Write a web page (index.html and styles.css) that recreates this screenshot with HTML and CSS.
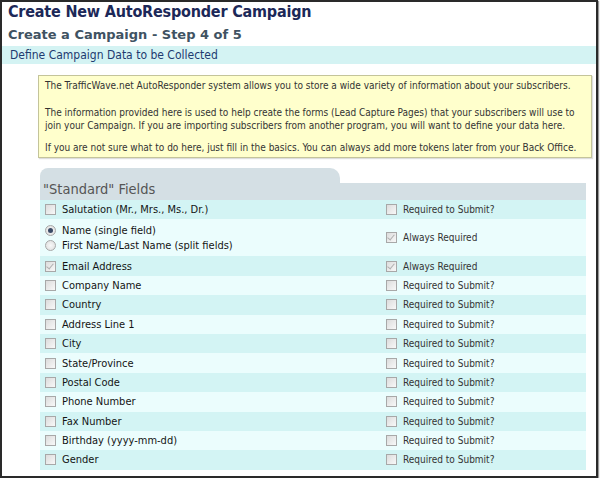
FILE: index.html
```html
<!DOCTYPE html>
<html>
<head>
<meta charset="utf-8">
<link rel="stylesheet" href="styles.css">
</head>
<body>
<div class="frame">
  <h1 class="title">Create New AutoResponder Campaign</h1>
  <h2 class="subtitle">Create a Campaign - Step 4 of 5</h2>
  <div class="section-bar">Define Campaign Data to be Collected</div>

  <div class="info">
    <p class="p1">The TrafficWave.net AutoResponder system allows you to store a wide variety of information about your subscribers.</p>
    <p class="p2">The information provided here is used to help create the forms (Lead Capture Pages) that your subscribers will use to join your Campaign. If you are importing subscribers from another program, you will want to define your data here.</p>
    <p>If you are not sure what to do here, just fill in the basics. You can always add more tokens later from your Back Office.</p>
  </div>

  <div class="fields">
    <div class="tab"></div>
    <div class="fields-head">"Standard" Fields</div>

    <div class="row dark">
      <div class="cell"><span class="cb"></span>Salutation (Mr., Mrs., Ms., Dr.)</div>
      <div class="cell req"><span class="cb"></span>Required to Submit?</div>
    </div>
    <div class="row light double">
      <div class="cell stack">
        <div class="line"><span class="radio on"></span>Name (single field)</div>
        <div class="line"><span class="radio"></span>First Name/Last Name (split fields)</div>
      </div>
      <div class="cell req"><span class="cb checked"></span>Always Required</div>
    </div>
    <div class="row dark">
      <div class="cell"><span class="cb checked"></span>Email Address</div>
      <div class="cell req"><span class="cb checked"></span>Always Required</div>
    </div>
    <div class="row light">
      <div class="cell"><span class="cb"></span>Company Name</div>
      <div class="cell req"><span class="cb"></span>Required to Submit?</div>
    </div>
    <div class="row dark">
      <div class="cell"><span class="cb"></span>Country</div>
      <div class="cell req"><span class="cb"></span>Required to Submit?</div>
    </div>
    <div class="row light">
      <div class="cell"><span class="cb"></span>Address Line 1</div>
      <div class="cell req"><span class="cb"></span>Required to Submit?</div>
    </div>
    <div class="row dark">
      <div class="cell"><span class="cb"></span>City</div>
      <div class="cell req"><span class="cb"></span>Required to Submit?</div>
    </div>
    <div class="row light">
      <div class="cell"><span class="cb"></span>State/Province</div>
      <div class="cell req"><span class="cb"></span>Required to Submit?</div>
    </div>
    <div class="row dark">
      <div class="cell"><span class="cb"></span>Postal Code</div>
      <div class="cell req"><span class="cb"></span>Required to Submit?</div>
    </div>
    <div class="row light">
      <div class="cell"><span class="cb"></span>Phone Number</div>
      <div class="cell req"><span class="cb"></span>Required to Submit?</div>
    </div>
    <div class="row dark">
      <div class="cell"><span class="cb"></span>Fax Number</div>
      <div class="cell req"><span class="cb"></span>Required to Submit?</div>
    </div>
    <div class="row light">
      <div class="cell"><span class="cb"></span>Birthday (yyyy-mm-dd)</div>
      <div class="cell req"><span class="cb"></span>Required to Submit?</div>
    </div>
    <div class="row dark">
      <div class="cell"><span class="cb"></span>Gender</div>
      <div class="cell req"><span class="cb"></span>Required to Submit?</div>
    </div>
  </div>
</div>
</body>
</html>
```
FILE: styles.css
```css
html, body {
  margin: 0;
  padding: 0;
  background: #ffffff;
}
.frame {
  width: 594px;
  height: 474px;
  border: 2px solid #2a2a2a;
  box-shadow: 1px 1px 1px #999;
  overflow: hidden;
  font-family: "DejaVu Sans Condensed", "DejaVu Sans", sans-serif;
  color: #222;
}
.title {
  margin: 0;
  padding: 0 0 0 6px;
  height: 20px;
  font-size: 16px;
  line-height: 20px;
  letter-spacing: -0.2px;
  font-weight: bold;
  color: #1c2858;
}
.subtitle {
  margin: 0;
  padding: 2px 0 0 6px;
  height: 22px;
  font-family: "DejaVu Sans", sans-serif;
  font-size: 13px;
  line-height: 22px;
  font-weight: bold;
  color: #405262;
}
.section-bar {
  height: 18px;
  line-height: 18px;
  background: #d4f3f3;
  padding-left: 8px;
  font-size: 12px;
  color: #1e3b70;
}
.info {
  margin: 11px 4px 0 36px;
  border: 1px solid #c4c49a;
  background: #ffffcc;
  padding: 3px 6px 3px 6px;
  font-size: 10px;
  line-height: 13px;
  color: #333;
  box-shadow: 1px 1px 1px #ddd;
}
.info p {
  margin: 0;
}
.info .p1 {
  margin-bottom: 14px;
}
.info .p2 {
  margin-bottom: 9px;
}
.fields {
  margin: 10px 0 0 38px;
  width: 546px;
}
.tab {
  width: 300px;
  height: 15px;
  background: #d4dfe4;
  border-radius: 8px 10px 0 0;
}
.fields-head {
  height: 17px;
  background: #d4dfe4;
  font-size: 14.5px;
  line-height: 13px;
  padding-left: 3px;
  color: #555;
}
.row {
  display: grid;
  grid-template-columns: 346px 1fr;
  height: 19.4px;
  align-items: center;
}
.row.double {
  height: 37px;
}
.dark { background: #d3f4f4; }
.light { background: #ebfdfd; }
.cell {
  display: flex;
  align-items: center;
  padding-left: 5px;
  font-size: 11px;
  color: #141414;
}
.cell.req {
  padding-left: 0;
  font-size: 10px;
  color: #333;
}
.cell.stack {
  flex-direction: column;
  align-items: flex-start;
  gap: 2px;
}
.line {
  display: flex;
  align-items: center;
}
.cb {
  display: inline-block;
  width: 9px;
  height: 9px;
  border: 1px solid #a8a8a8;
  background: linear-gradient(135deg, #dcdcdc, #f8f8f8);
  margin-right: 6px;
  flex: none;
  position: relative;
}
.cb.checked::after {
  content: "";
  position: absolute;
  left: 2px;
  top: 0px;
  width: 3px;
  height: 6px;
  border: solid #b0b0b0;
  border-width: 0 1px 1px 0;
  transform: rotate(40deg);
}
.radio {
  display: inline-block;
  width: 9px;
  height: 9px;
  border: 1px solid #a8a8a8;
  border-radius: 50%;
  background: radial-gradient(circle, #f8f8f8, #dcdcdc);
  margin-right: 6px;
  flex: none;
  position: relative;
}
.radio.on::after {
  content: "";
  position: absolute;
  left: 2px;
  top: 2px;
  width: 5px;
  height: 5px;
  border-radius: 50%;
  background: #3a4a66;
}
```
